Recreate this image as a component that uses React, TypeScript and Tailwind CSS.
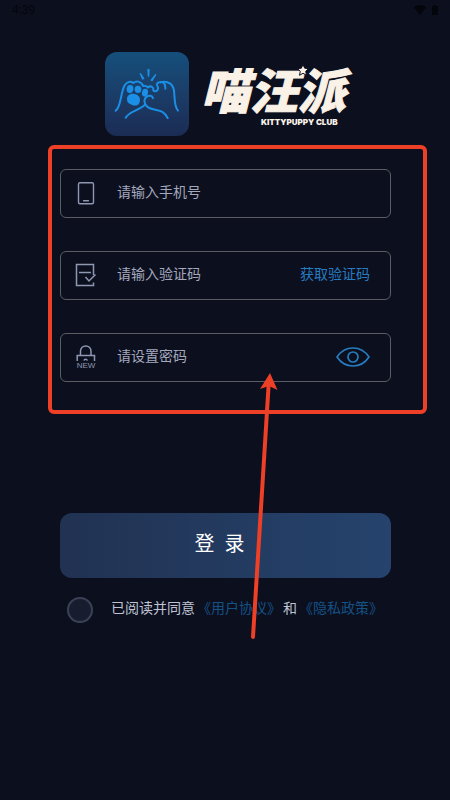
import React, { useState } from 'react';

const TEXT_FONT = "font-['Noto_Sans_CJK_SC',sans-serif]";

type FieldProps = {
  id: string;
  label: string;
  type?: string;
  icon: React.ReactNode;
  action?: React.ReactNode;
};

function PawsLogo() {
  return (
    <svg viewBox="18 18 252 252" className="w-full h-full" fill="none" stroke="#1b8fe6" strokeWidth="6" strokeLinecap="round" strokeLinejoin="round">
      <path d="M50 194C66 184 65 140 76 120C81 108 94 104 103 111C113 103 128 107 132 120C138 118 143 121 147 124" />
      <path d="M80 215C90 197 119 193 137 177" />
      <path d="M206 216C194 192 180 194 163 190C138 184 130 165 142 153C150 147 160 148 162 157" />
      <path d="M147 123C157 118 165 124 163 134C172 139 180 131 176 122C171 114 175 110 182 109C193 106 200 113 199 128" />
      <path d="M184 109C207 102 223 116 225 135C228 158 225 182 237 194" />
      <g fill="#1b8fe6" stroke="none">
        <ellipse cx="93" cy="129" rx="10" ry="12" transform="rotate(10 93 129)" />
        <ellipse cx="117" cy="130" rx="10" ry="11" />
        <ellipse cx="138" cy="140" rx="9" ry="12" transform="rotate(12 138 140)" />
        <path d="M84 158C85 145 98 140 110 145C122 149 126 160 121 171C116 181 106 180 98 176C88 173 83 166 84 158Z" />
        <path d="M124 83L134 97L131 99Z M147 71H150L149 90H148Z M170 86L159 104L157 102Z" stroke="#1b8fe6" strokeWidth="4" />
      </g>
    </svg>
  );
}

function PhoneIcon() {
  return (
    <svg viewBox="0 0 22 26" className="w-[22px] h-[26px]" fill="none" stroke="#8f98b2" strokeWidth="1.4" strokeLinecap="round">
      <rect x="3.5" y="1.8" width="15" height="21" rx="1.5" />
      <path d="M8.5 19.8H13.5" />
    </svg>
  );
}

function CodeIcon() {
  return (
    <svg viewBox="0 0 22 26" className="w-[22px] h-[26px]" fill="none" stroke="#8f98b2" strokeWidth="1.5">
      <path d="M18.5 12V1.5H1.5V22.5H18.5V19.5" />
      <path d="M4 9.5H16" />
      <path d="M10.5 14L14 18L20.5 11.5" />
    </svg>
  );
}

function LockIcon() {
  return (
    <svg viewBox="0 0 22 26" className="w-[22px] h-[26px]" fill="none" stroke="#8f98b2" strokeWidth="1.5">
      <path d="M5.5 10.5V6.5C5.5 -1 16 -1 16 6.5V10.5" />
      <path d="M2.2 16V10.5H19.5V16" />
      <path d="M8.8 15.5A2 2 0 0 1 12.4 15.5" />
      <text x="11" y="22.5" textAnchor="middle" fill="#8f98b2" stroke="none" fontSize="8" fontFamily="Liberation Sans, sans-serif">NEW</text>
    </svg>
  );
}

function EyeIcon() {
  return (
    <svg viewBox="0 0 34 22" className="w-[34px] h-[22px]" fill="none" stroke="#267cc1" strokeWidth="1.7">
      <path d="M1 10C9 -2 25 -2 33 10C25 22 9 22 1 10Z" strokeLinejoin="round" />
      <circle cx="17" cy="10" r="5" />
    </svg>
  );
}

function Field({ id, label, type = 'text', icon, action }: FieldProps) {
  return (
    <div className="flex items-center h-[49px] pl-[14px] pr-5 border border-[#5b5d62] rounded-md">
      <label htmlFor={id} aria-label={label} className="shrink-0">{icon}</label>
      <input
        id={id}
        type={type}
        placeholder={label}
        className="flex-1 min-w-0 ml-5 pb-1.5 bg-transparent text-sm text-[#a3a8bd] placeholder:text-[#a3a8bd] placeholder:opacity-100 outline-none"
      />
      {action}
    </div>
  );
}

function StatusBar() {
  return (
    <div className="flex items-center justify-between h-5 px-3 text-[#04060c]">
      <span className="text-xs font-['Roboto',sans-serif]">4:39</span>
      <div className="flex items-center gap-1.5">
        <svg viewBox="0 0 12 10" className="w-3 h-2.5" fill="currentColor">
          <path d="M0 2.5C3.5 -0.7 8.5 -0.7 12 2.5L6 10Z" />
        </svg>
        <svg viewBox="0 0 6 10" className="w-1.5 h-2.5" fill="currentColor">
          <path d="M0 1H2V0H4V1H6V10H0Z" />
        </svg>
      </div>
    </div>
  );
}

export default function App() {
  const [showPassword, setShowPassword] = useState(false);
  const [agreed, setAgreed] = useState(false);

  return (
    <div className={`min-h-screen bg-[#0c0f1e] ${TEXT_FONT}`}>
      <StatusBar />

      <main className="pl-[60px] pr-[59px] pt-8">
        <header className="flex items-center justify-center gap-3">
          <div className="w-21 h-21 shrink-0 rounded-xl bg-linear-to-b from-[#154f7c] to-[#1b2c54]">
            <PawsLogo />
          </div>
          <div className="relative text-[#faf1e7]">
            <h1 className="text-5xl leading-[56px] font-black italic whitespace-nowrap [-webkit-text-stroke:1px_#faf1e7]">喵汪派</h1>
            <p className="pr-2 text-right text-[8px] leading-3 font-black font-['Inter',sans-serif]">KITTYPUPPY CLUB</p>
            <svg viewBox="0 0 12 12" className="absolute top-1 left-24 w-3 h-3" fill="currentColor" stroke="#0c0f1e" strokeWidth="1">
              <path d="M6 0.5L7.7 4.2L11.6 4.6L8.7 7.3L9.5 11.3L6 9.3L2.5 11.3L3.3 7.3L0.4 4.6L4.3 4.2Z" />
            </svg>
          </div>
        </header>

        <form onSubmit={(e) => e.preventDefault()}>
          <div className="relative mt-[33px] flex flex-col gap-[33px]">
            <Field id="phone" label="请输入手机号" type="tel" icon={<PhoneIcon />} />
            <Field
              id="code"
              label="请输入验证码"
              icon={<CodeIcon />}
              action={<button type="button" className="shrink-0 pb-1.5 text-sm text-[#267cc1]">获取验证码</button>}
            />
            <Field
              id="password"
              label="请设置密码"
              type={showPassword ? 'text' : 'password'}
              icon={<LockIcon />}
              action={
                <button type="button" aria-label="显示密码" onClick={() => setShowPassword(!showPassword)} className="shrink-0">
                  <EyeIcon />
                </button>
              }
            />

            {/* highlight frame and pointer */}
            <div className="absolute -top-6 -bottom-8 -left-3 -right-9 border-4 border-[#ee3f27] rounded-md pointer-events-none" />
            <svg viewBox="0 0 36 268" className="absolute top-51 left-1/2 ml-5 w-9 h-67 z-10 pointer-events-none" fill="#ee3f27">
              <path d="M7 264L22.5 14" stroke="#ee3f27" strokeWidth="4" strokeLinecap="round" />
              <path d="M24 0L31.5 17L23 13L14 16Z" />
            </svg>
          </div>

          <button type="submit" className="w-full h-[65px] mt-[131px] pr-3 pb-1.5 rounded-xl bg-linear-to-r from-[#213252] to-[#25436d] text-xl text-white">
            登&ensp;录
          </button>

          <div className="flex items-center mt-[19px] pl-[7px] text-sm text-[#bfc3d3]">
            <input
              id="agree"
              type="checkbox"
              checked={agreed}
              onChange={(e) => setAgreed(e.target.checked)}
              className="appearance-none shrink-0 w-[26px] h-[26px] border-2 border-[#3b4256] rounded-full bg-[#171d2f] checked:bg-[#267cc1]"
            />
            <div className="ml-[18px] pb-1.5 whitespace-nowrap">
              <label htmlFor="agree">已阅读并同意</label>
              <a href="#terms" className="mx-0.5 text-[#145286]">《用户协议》</a>
              和
              <a href="#privacy" className="mx-0.5 text-[#145286]">《隐私政策》</a>
            </div>
          </div>
        </form>
      </main>
    </div>
  );
}
